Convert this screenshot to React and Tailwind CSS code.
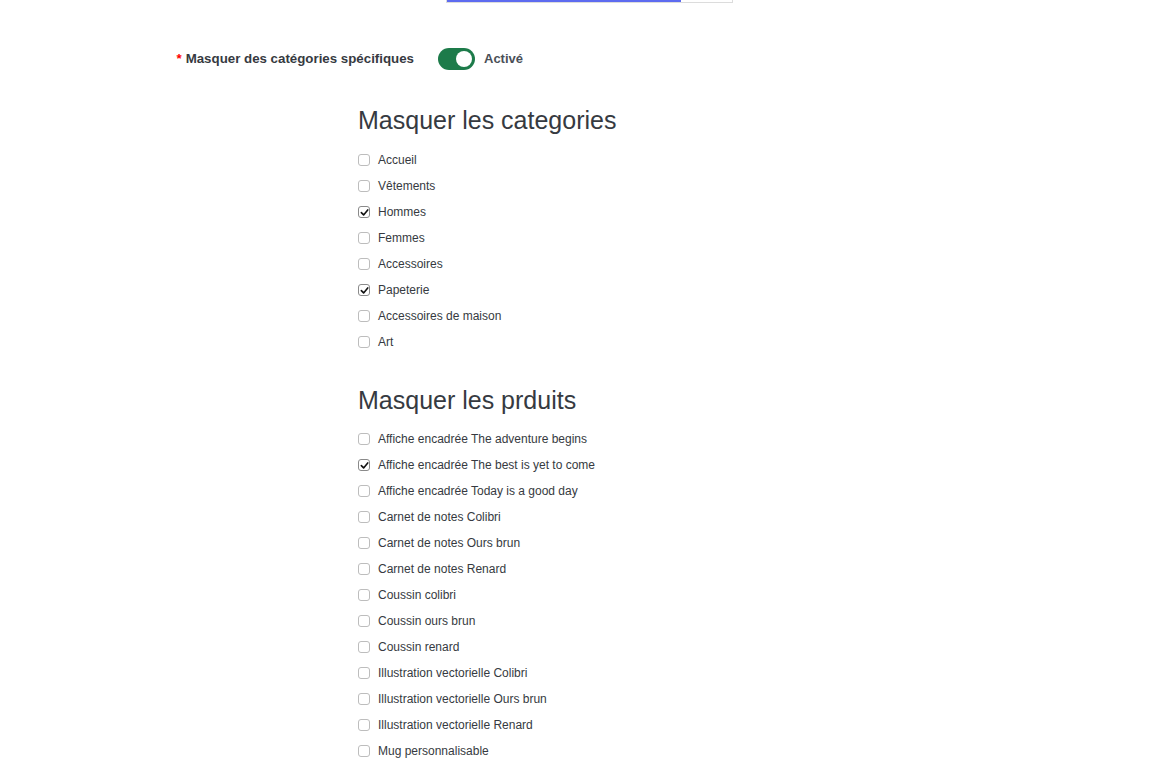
const CATEGORIES = [
  { label: 'Accueil', checked: false },
  { label: 'Vêtements', checked: false },
  { label: 'Hommes', checked: true },
  { label: 'Femmes', checked: false },
  { label: 'Accessoires', checked: false },
  { label: 'Papeterie', checked: true },
  { label: 'Accessoires de maison', checked: false },
  { label: 'Art', checked: false },
]

const PRODUITS = [
  { label: 'Affiche encadrée The adventure begins', checked: false },
  { label: 'Affiche encadrée The best is yet to come', checked: true },
  { label: 'Affiche encadrée Today is a good day', checked: false },
  { label: 'Carnet de notes Colibri', checked: false },
  { label: 'Carnet de notes Ours brun', checked: false },
  { label: 'Carnet de notes Renard', checked: false },
  { label: 'Coussin colibri', checked: false },
  { label: 'Coussin ours brun', checked: false },
  { label: 'Coussin renard', checked: false },
  { label: 'Illustration vectorielle Colibri', checked: false },
  { label: 'Illustration vectorielle Ours brun', checked: false },
  { label: 'Illustration vectorielle Renard', checked: false },
  { label: 'Mug personnalisable', checked: false },
]

function Case({ label, checked }) {
  return (
    <div className="h-[26px] flex items-center">
      <div className={`w-[12px] h-[12px] rounded-[3px] border flex items-center justify-center bg-white ${checked ? 'border-[#8a8a8a]' : 'border-[#bdbdbd]'}`}>
        {checked && (
          <svg width="9" height="9" viewBox="0 0 10 10">
            <path d="M1.5 5.2 L4 7.7 L8.6 2.2" fill="none" stroke="#111" strokeWidth="1.8" strokeLinecap="round" strokeLinejoin="round" />
          </svg>
        )}
      </div>
      <span className="ml-[8px] text-[12px] text-[#363a41]">{label}</span>
    </div>
  )
}

export default function App() {
  return (
    <div className="w-[1171px] h-[760px] bg-white overflow-hidden" style={{ fontFamily: '"Liberation Sans", Arial, sans-serif' }}>
      {/* barre de progression */}
      <div className="ml-[446px] w-[287px] h-[3px] border-x border-b border-[#dcdcdc] box-border">
        <div className="w-[234px] h-[2px] bg-[#5d6bf0]" />
      </div>

      {/* Interrupteur */}
      <div className="flex items-center mt-[45px]">
        <div className="w-[414px] text-right text-[13.3px] font-bold text-[#363a41]">
          <span className="text-[#f00] mr-[4px]">*</span>
          Masquer des catégories spécifiques
        </div>
        <div className="ml-[24px] w-[37px] h-[22px] rounded-full bg-[#1d7b4a] flex items-center justify-end pr-[3px]">
          <div className="w-[16px] h-[16px] rounded-full bg-white" />
        </div>
        <span className="ml-[9px] text-[13px] font-bold text-[#4a4f57]">Activé</span>
      </div>

      <div className="ml-[358px]">
        <h2 className="mt-[35px] text-[25px] leading-[30px] text-[#363a41] mb-[12px]">Masquer les categories</h2>
        {CATEGORIES.map((c) => <Case key={c.label} {...c} />)}

        <h2 className="mt-[30px] text-[25px] leading-[30px] text-[#363a41] mb-[11px]">Masquer les prduits</h2>
        {PRODUITS.map((p) => <Case key={p.label} {...p} />)}
      </div>
    </div>
  )
}
